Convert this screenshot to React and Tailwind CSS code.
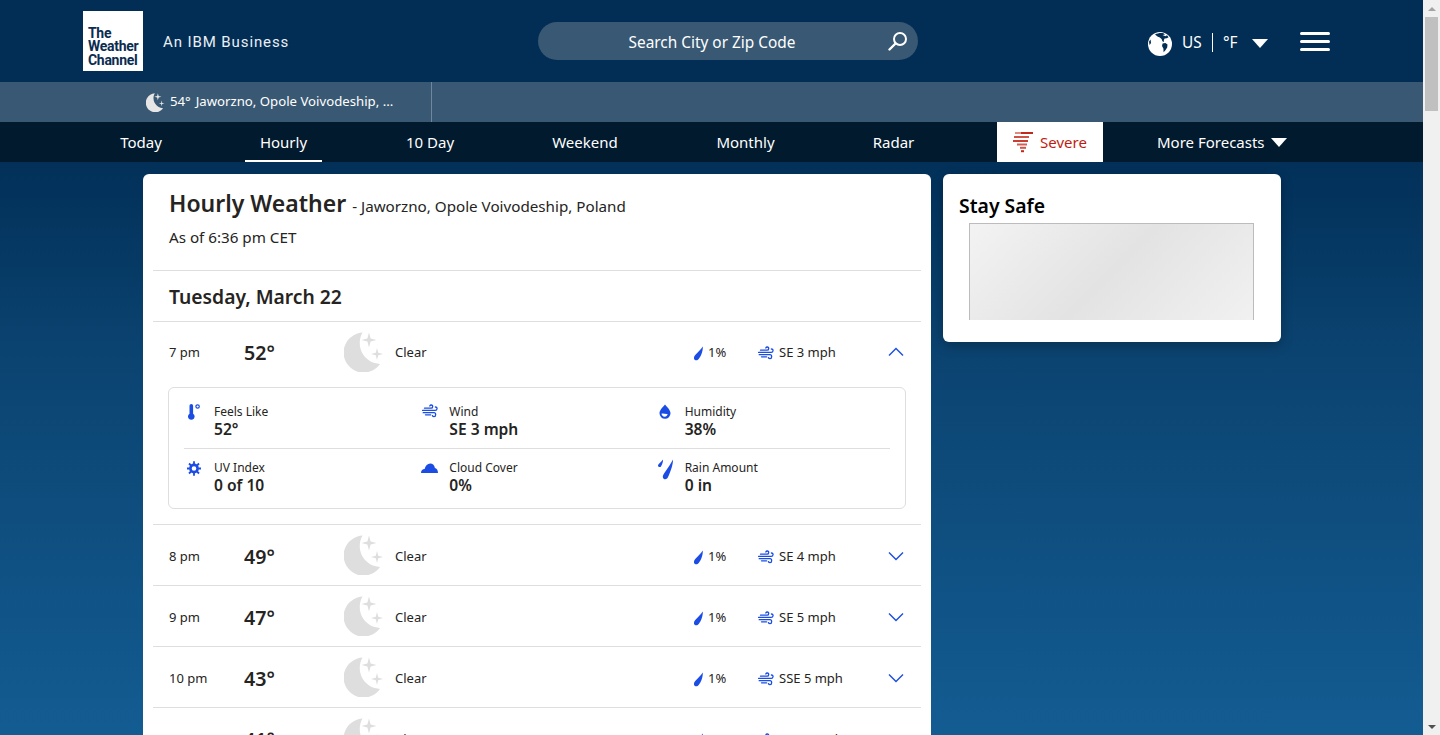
import React from "react";

const FONT = "[font-family:'Noto_Sans','Open_Sans',sans-serif]";

function Moon({ className, color = "#dedede" }) {
  return (
    <svg viewBox="0 0 40 40" className={className} fill={color}>
      <path d="M18.5 0.6A20 20 0 1 0 36 32A21 21 0 0 1 18.5 0.6Z" />
      <path d="M25 0.5L26.6 6.4L32.5 8L26.6 9.6L25 15.5L23.4 9.6L17.5 8L23.4 6.4Z" />
      <path d="M33 16L34.2 20.8L39 22L34.2 23.2L33 28L31.8 23.2L27 22L31.8 20.8Z" />
    </svg>
  );
}

function Drop({ className }) {
  return (
    <svg viewBox="0 0 10 15" className={className} fill="#1b4de4">
      <path d="M9.3 0.4C9.6 4.5 7.6 10 5.2 13C3.8 14.8 1.2 14.6 0.6 12.9C0.1 11.4 1 10 2.2 8.6C4.4 6.2 7.2 3.2 9.3 0.4Z" />
    </svg>
  );
}

function Wind({ className }) {
  return (
    <svg viewBox="0 0 16 14" className={className} fill="none" stroke="#1b4de4" strokeWidth="1.3" strokeLinecap="round">
      <path d="M2.5 4.2H9.2C11 4.2 11.3 1 9.3 1C8.4 1 8 1.5 7.8 2" />
      <path d="M0.6 6.4H13.2C15.4 6.4 15.8 3 13.4 3" />
      <path d="M1.2 8.7H12C14.2 8.7 14.2 12.6 12 12.6C11.2 12.6 10.7 12.2 10.4 11.6" />
      <path d="M3.5 10.8H8.6" />
    </svg>
  );
}

function Chevron({ up }) {
  return (
    <svg viewBox="0 0 16 10" className="w-4 h-[10px]" fill="none" stroke="#1b4de4" strokeWidth="1.4">
      <path d={up ? "M1 8.5L8 1.5L15 8.5" : "M1 1.5L8 8.5L15 1.5"} />
    </svg>
  );
}

function Row({ time, temp, wind, up, first = false }) {
  const shift = first ? "pt-[2px]" : "pt-[4px]";
  return (
    <div className={`${first ? "h-[60px]" : "h-[61px] border-b border-[#dedede]"} shrink-0 flex items-center pl-4`}>
      <div className={`w-[75px] text-[13px] text-[#252422] ${shift}`}>{time}</div>
      <div className={`w-[100px] text-[19.6px] font-semibold text-[#252422] ${shift}`}>{temp}</div>
      <Moon className="w-10 h-10 mr-[11px]" />
      <div className={`text-[13px] text-[#252422] ${shift}`}>Clear</div>
      <div className={`ml-auto w-[65px] flex items-center text-[13px] text-[#252422] ${shift}`}>
        <Drop className="w-[11px] h-[15px] mr-[4px]" />
        1%
      </div>
      <div className={`w-[130px] flex items-center text-[13px] text-[#252422] ${shift}`}>
        <Wind className="w-4 h-[14px] mr-[5px]" />
        {wind}
      </div>
      <div className={`mr-[17px] flex ${first ? "" : "pt-[2px]"}`}>
        <Chevron up={up} />
      </div>
    </div>
  );
}

function Detail({ icon, label, value, tight = false }) {
  return (
    <div className="flex">
      <div className="w-[30px] flex pl-[3px] pt-[2px]">{icon}</div>
      <div className={tight ? "" : "pt-px"}>
        <div className="text-[12px] leading-[17px] text-[#252422]">{label}</div>
        <div className={`text-[15.6px] font-semibold text-[#252422] ${tight ? "leading-[18px]" : "leading-[19px]"}`}>{value}</div>
      </div>
    </div>
  );
}

const navItems = [
  ["Today", "w-[72px]"],
  ["Hourly", "w-[77px]"],
  ["10 Day", "w-[78px] ml-px"],
  ["Weekend", "w-[96px]"],
  ["Monthly", "w-[89px]"],
  ["Radar", "w-[71px]"],
];

export default function App() {
  return (
    <div className={`h-screen flex overflow-hidden ${FONT}`}>
      <div className="w-[1423px] shrink-0 flex flex-col">
        <header className="h-[82px] shrink-0 bg-[#022d54] flex items-center pl-[83px] text-white">
          <div className="w-[60px] h-[60px] bg-white flex flex-col justify-end pb-[4px] pl-[5px] [font-family:'Roboto',sans-serif] text-[#0b2c50] font-bold text-[14px] leading-[13.5px] tracking-[-0.3px]">
            <div>The</div>
            <div>Weather</div>
            <div>Channel</div>
          </div>
          <div className="ml-5 w-[125px] pt-[2px] whitespace-nowrap text-[15px] tracking-[0.9px] text-[#eaf0f5] [font-family:'Roboto',sans-serif]">An IBM Business</div>
          <div className="ml-[250px] w-[380px] h-[38px] rounded-full bg-[#395873] relative flex items-center justify-center pr-[32px] pt-[4px] text-[15.4px]">
            Search City or Zip Code
            <svg viewBox="0 0 20 20" className="absolute right-[10px] top-[9px] w-5 h-5" fill="none" stroke="white" strokeWidth="2">
              <circle cx="12" cy="8" r="6" />
              <path d="M7.5 12.5L1.5 18.5" strokeWidth="2.4" strokeLinecap="round" />
            </svg>
          </div>
          <svg viewBox="0 0 24 24" className="ml-[230px] w-6 h-6 mt-[6px]">
            <circle cx="12" cy="12" r="12" fill="white" />
            <path d="M7 2.5C9.5 1.2 13 0.7 15.5 1.3L17 2.6L14.5 3L17.5 4.3L19 3.2L20.6 5.2L18.8 6.2L16.6 6.4L15.8 8.2L16 10L14.4 9.2L13.6 7L11.8 5.6L9.5 4.4Z" fill="#022d54" />
            <path d="M14.6 11.6L17.4 11L19.5 12.6L19.2 15.4L17.2 18.4L15.6 20.2L15.4 16.6L14 14Z" fill="#022d54" />
            <path d="M1 9.5L2.6 7.4L3 11L1.6 13Z" fill="#022d54" />
          </svg>
          <div className="ml-[10px] w-[30px] pt-[4px] text-[15.4px]">US</div>
          <div className="w-px h-[19px] bg-white mt-[2px]"></div>
          <div className="ml-[10px] w-[29px] pt-[4px] text-[15.4px]">°F</div>
          <div className="w-0 h-0 border-l-[8.5px] border-r-[8.5px] border-t-[9px] border-l-transparent border-r-transparent border-t-white mt-[4px]"></div>
          <div className="ml-[32px] w-[30px] flex flex-col gap-[5px]">
            <div className="h-[3px] rounded-full bg-white"></div>
            <div className="h-[3px] rounded-full bg-white"></div>
            <div className="h-[3px] rounded-full bg-white"></div>
          </div>
        </header>

        <div className="h-[40px] shrink-0 bg-[#395873] flex items-center text-white text-[13.2px]">
          <div className="w-[432px] h-full border-r border-[#6f879b] flex items-center pl-[146px]">
            <Moon className="w-[19px] h-[19px] mr-[5px]" color="#e6e6e6" />
            <span className="mr-[5px]">54°</span>
            <span className="whitespace-nowrap">Jaworzno, Opole Voivodeship, ...</span>
          </div>
        </div>

        <nav className="h-[40px] shrink-0 bg-[#011a2e] flex pl-[105px] gap-[68px] text-white text-[15px]">
          {navItems.map(([name, w]) => (
            <div key={name} className={`${w} h-full flex items-center justify-center ${name === "Hourly" ? "border-b-2 border-white pt-[2px]" : ""}`}>
              {name}
            </div>
          ))}
          <div className="w-[106px] h-full bg-white flex items-center justify-center text-[#c01c12]">
            <svg viewBox="0 0 20 21" className="w-5 h-[21px] mr-[7px]" fill="none" stroke="#c4281c" strokeWidth="2">
              <path d="M8 1H20" />
              <path d="M2 1H8" opacity="0.55" />
              <path d="M1 5H16" opacity="0.8" />
              <path d="M0 9H15" opacity="0.9" />
              <path d="M4 12.5H14" opacity="0.75" />
              <path d="M7 15.8H13" opacity="0.8" />
              <path d="M8 19.2H11" />
            </svg>
            Severe
          </div>
          <div className="-ml-3.5 flex items-center whitespace-nowrap">
            More Forecasts
            <div className="ml-[6px] w-0 h-0 border-l-[8.5px] border-r-[8.5px] border-t-[9px] border-l-transparent border-r-transparent border-t-white"></div>
          </div>
        </nav>

        <main className="flex-1 min-h-0 overflow-hidden bg-linear-to-b from-[#023059] via-[#0b4370] via-33% to-[#135c92] flex items-start pl-[143px] pt-3 gap-3">
          <section className="w-[788px] shrink-0 bg-white rounded-t-md px-[10px] flex flex-col">
            <div className="h-[97px] shrink-0 border-b border-[#dedede] pl-4 pt-[13px]">
              <div className="h-[32px] flex items-center">
                <span className="text-[23px] font-semibold text-[#252422]">Hourly Weather</span>
                <span className="ml-[6px] mt-[7px] text-[15.2px] text-[#252422]">- Jaworzno, Opole Voivodeship, Poland</span>
              </div>
              <div className="mt-[8px] text-[15.2px] leading-[20px] text-[#252422]">As of 6:36 pm CET</div>
            </div>
            <div className="h-[51px] shrink-0 border-b border-[#dedede] pl-4 pt-[2px] flex items-center text-[19.3px] font-semibold text-[#252422]">Tuesday, March 22</div>

            <div className="border-b border-[#dedede] pb-[15px]">
              <Row time="7 pm" temp="52°" wind="SE 3 mph" up first />
              <div className="mx-[15px] mt-[5px] h-[122px] border border-[#dedede] rounded-md px-[15px] pt-[14px]">
                <div className="grid grid-cols-3 h-[47px] border-b border-[#dedede]">
                  <Detail
                    label="Feels Like"
                    value="52°"
                    icon={
                      <svg viewBox="0 0 13 16" className="w-[13px] h-4 ml-px" fill="#1b4de4">
                        <path d="M1.5 1.8a1.8 1.8 0 0 1 3.6 0v8a3.3 3.3 0 1 1-3.6 0Z" />
                        <circle cx="9.6" cy="2.5" r="1.7" fill="none" stroke="#1b4de4" strokeWidth="1.2" />
                      </svg>
                    }
                  />
                  <Detail label="Wind" value="SE 3 mph" icon={<Wind className="w-4 h-[14px]" />} />
                  <Detail
                    label="Humidity"
                    value="38%"
                    icon={
                      <svg viewBox="0 0 12 15" className="w-3 h-[15px] ml-px" fill="#1b4de4">
                        <path d="M6 0.5C8 3 11.5 6 11.5 9.3A5.5 5.5 0 0 1 0.5 9.3C0.5 6 4 3 6 0.5Z" />
                        <path d="M2.5 9.8C4 9 6.5 10.4 8.6 10C8.2 11.8 7 12.9 5.6 12.8C4 12.7 2.8 11.4 2.5 9.8Z" fill="white" />
                      </svg>
                    }
                  />
                </div>
                <div className="grid grid-cols-3 pt-[10px]">
                  <Detail
                    tight
                    label="UV Index"
                    value="0 of 10"
                    icon={
                      <svg viewBox="0 0 14 15" className="w-[14px] h-[15px]" stroke="#1b4de4" fill="none">
                        <circle cx="7" cy="7.5" r="3.6" strokeWidth="2.6" />
                        <path d="M7 0.3V3M7 12V14.7M0 7.5H2.7M11.3 7.5H14M2 2.5L4 4.5M10 10.5L12 12.5M12 2.5L10 4.5M4 10.5L2 12.5" strokeWidth="1.8" />
                      </svg>
                    }
                  />
                  <Detail
                    tight
                    label="Cloud Cover"
                    value="0%"
                    icon={
                      <svg viewBox="0 0 17 10" className="w-[17px] h-[10px] mt-[2px] -ml-px" fill="#1b4de4">
                        <path d="M0 10C0 7.6 1.6 6 3.6 6C4.4 2.6 6.6 0.5 9.2 0.5C11.8 0.5 13.6 2.4 13.9 5C15.6 5.2 17 7 17 10Z" />
                      </svg>
                    }
                  />
                  <Detail
                    tight
                    label="Rain Amount"
                    value="0 in"
                    icon={
                      <svg viewBox="0 0 17 21" className="w-[17px] h-[21px] -mt-[2px] -ml-px" fill="#1b4de4">
                        <path d="M16 0.5C16.2 5 13.6 13 10.8 18.6C9.6 21 6.2 20.6 5.8 18.2C5.6 16.6 7 14.6 8.4 12.6C10.8 9 14 4.4 16 0.5Z" />
                        <path d="M6 0.5C6.2 2.4 5.2 5.6 4 7.4C3.2 8.6 1.2 8.2 1 6.8C0.9 5.8 2 4.8 3 3.8C4 2.8 5.2 1.6 6 0.5Z" />
                      </svg>
                    }
                  />
                </div>
              </div>
            </div>

            <Row time="8 pm" temp="49°" wind="SE 4 mph" />
            <Row time="9 pm" temp="47°" wind="SE 5 mph" />
            <Row time="10 pm" temp="43°" wind="SSE 5 mph" />
            <Row time="11 pm" temp="41°" wind="SSE 5 mph" />
          </section>

          <aside className="w-[338px] shrink-0 h-[168px] bg-white rounded-md shadow-[0_4px_12px_rgba(0,0,0,0.25)] pt-[17px]">
            <div className="pl-4 text-[19.4px] leading-[30px] font-semibold text-black">Stay Safe</div>
            <div className="ml-[26px] mt-[2px] w-[285px] h-[97px] border-x border-t border-[#bcbcbc] bg-linear-135 from-[#f3f3f3] via-[#e3e3e3] to-[#f1f1f1]"></div>
          </aside>
        </main>
      </div>

      <div className="w-[17px] shrink-0 bg-[#f0f0f0] flex flex-col items-center">
        <div className="h-[17px] flex items-center justify-center">
          <div className="w-0 h-0 border-l-[4px] border-r-[4px] border-b-[4px] border-l-transparent border-r-transparent border-b-[#a3a3a3]"></div>
        </div>
        <div className="w-[13px] h-[94px] bg-[#c0c0c0]"></div>
        <div className="mt-auto h-[17px] flex items-center justify-center">
          <div className="w-0 h-0 border-l-[4px] border-r-[4px] border-t-[4px] border-l-transparent border-r-transparent border-t-[#505050]"></div>
        </div>
      </div>
    </div>
  );
}
